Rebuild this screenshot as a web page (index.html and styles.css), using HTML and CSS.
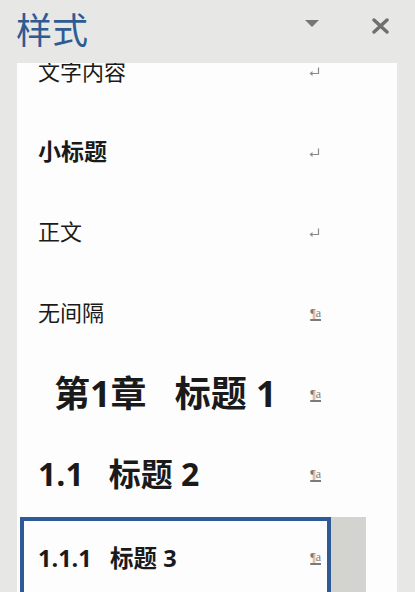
FILE: index.html
```html
<!DOCTYPE html>
<html lang="zh-CN">

<head>
    <meta charset="UTF-8">
    <meta name="viewport" content="width=device-width, initial-scale=1.0">
    <title>样式</title>
    <link rel="stylesheet" href="styles.css">
</head>

<body>
    <div class="pane">
        <div class="pane-header">
            <h1 class="pane-title">样式</h1>
            <div class="pane-tools">
                <svg class="menu-arrow" width="14" height="8" viewBox="0 0 14 8"><path d="M0 0 L14 0 L7 7 Z" fill="#777"/></svg>
                <svg class="close-btn" width="17" height="16" viewBox="0 0 17 16"><path d="M2 2 L15 14 M15 2 L2 14" stroke="#6f6f6f" stroke-width="3.4" stroke-linecap="round"/></svg>
            </div>
        </div>

        <div class="style-panel">
            <div class="style-list">
                <div class="style-item">
                    <div class="style-main">
                        <span class="label label-text">文字内容</span>
                        <svg class="para-mark" width="11" height="10" viewBox="0 0 11 10"><path d="M9.5 0.5 V6.5 H2.5" stroke="#8a8a8a" stroke-width="1.2" fill="none"/><path d="M0.5 6.5 L3.5 4 V9 Z" fill="#8a8a8a"/></svg>
                    </div>
                    <div class="style-btn"></div>
                </div>
                <div class="style-item">
                    <div class="style-main">
                        <span class="label label-sub">小标题</span>
                        <svg class="para-mark" width="11" height="10" viewBox="0 0 11 10"><path d="M9.5 0.5 V6.5 H2.5" stroke="#8a8a8a" stroke-width="1.2" fill="none"/><path d="M0.5 6.5 L3.5 4 V9 Z" fill="#8a8a8a"/></svg>
                    </div>
                    <div class="style-btn"></div>
                </div>
                <div class="style-item">
                    <div class="style-main">
                        <span class="label label-body">正文</span>
                        <svg class="para-mark" width="11" height="10" viewBox="0 0 11 10"><path d="M9.5 0.5 V6.5 H2.5" stroke="#8a8a8a" stroke-width="1.2" fill="none"/><path d="M0.5 6.5 L3.5 4 V9 Z" fill="#8a8a8a"/></svg>
                    </div>
                    <div class="style-btn"></div>
                </div>
                <div class="style-item">
                    <div class="style-main">
                        <span class="label label-body">无间隔</span>
                        <span class="link-mark">¶a</span>
                    </div>
                    <div class="style-btn"></div>
                </div>
                <div class="style-item">
                    <div class="style-main">
                        <span class="label label-h1">第1章&nbsp;&nbsp;&nbsp;标题 1</span>
                        <span class="link-mark">¶a</span>
                    </div>
                    <div class="style-btn"></div>
                </div>
                <div class="style-item">
                    <div class="style-main">
                        <span class="label label-h2">1.1&nbsp;&nbsp;&nbsp;标题 2</span>
                        <span class="link-mark">¶a</span>
                    </div>
                    <div class="style-btn"></div>
                </div>
                <div class="style-item selected">
                    <div class="style-main">
                        <span class="label label-h3">1.1.1&nbsp;&nbsp;&nbsp;标题 3</span>
                        <span class="link-mark">¶a</span>
                    </div>
                    <div class="style-btn"></div>
                </div>
            </div>
        </div>
    </div>
</body>

</html>
```

FILE: styles.css
```css
body {
    margin: 0;
    background-color: #e7e7e5;
    font-family: "Noto Sans CJK SC", "Noto Sans", sans-serif;
    overflow: hidden;
}

.pane {
    height: 592px;
    display: flex;
    flex-direction: column;
}

.pane-header {
    height: 63px;
    display: flex;
    align-items: center;
    justify-content: space-between;
    padding: 0 26px 0 16px;
    box-sizing: border-box;
}

.pane-title {
    margin: 0 0 8px 0;
    font-size: 36px;
    font-weight: normal;
    line-height: 1;
    color: #2f5b93;
}

.pane-tools {
    display: flex;
    align-items: center;
    gap: 53px;
    margin-bottom: 12px;
}

.menu-arrow {
    margin-top: -4px;
}

.style-panel {
    flex: 1;
    margin: 0 18px 0 17px;
    background: #fdfdfd;
    overflow: hidden;
}

.style-list {
    margin-top: -31px;
    padding-left: 3px;
    width: 346px;
}

.style-item {
    height: 80.5px;
    display: grid;
    grid-template-columns: 311px 35px;
}

.style-main {
    display: flex;
    align-items: center;
    justify-content: space-between;
    padding: 0 10px 0 18px;
    box-sizing: border-box;
}

.label {
    color: #1a1a1a;
    white-space: nowrap;
    font-family: "Open Sans", "Noto Sans CJK SC", sans-serif;
    margin-bottom: 6px;
}

.label-text {
    font-size: 22px;
    margin-top: -4px;
    margin-bottom: 0;
}

.label-sub {
    font-size: 23px;
    font-weight: bold;
}

.label-body {
    font-size: 22px;
}

.label-h1 {
    font-size: 36px;
    font-weight: bold;
    margin-left: 16px;
}

.label-h2 {
    font-size: 32px;
    font-weight: bold;
}

.label-h3 {
    font-size: 23.5px;
    font-weight: bold;
    margin-bottom: 0;
}

.para-mark {
    margin-right: 1px;
}

.link-mark {
    font-family: "Liberation Serif", serif;
    font-size: 12px;
    color: #7a7a7a;
    text-decoration: underline;
    text-decoration-thickness: 1.5px;
    text-underline-offset: 2px;
}

.selected {
    margin-top: 2px;
}

.selected .style-main {
    border: 4px solid #2e5b97;
    padding: 0 6px 0 14px;
}

.selected .style-btn {
    background: #d3d3d0;
}
```
